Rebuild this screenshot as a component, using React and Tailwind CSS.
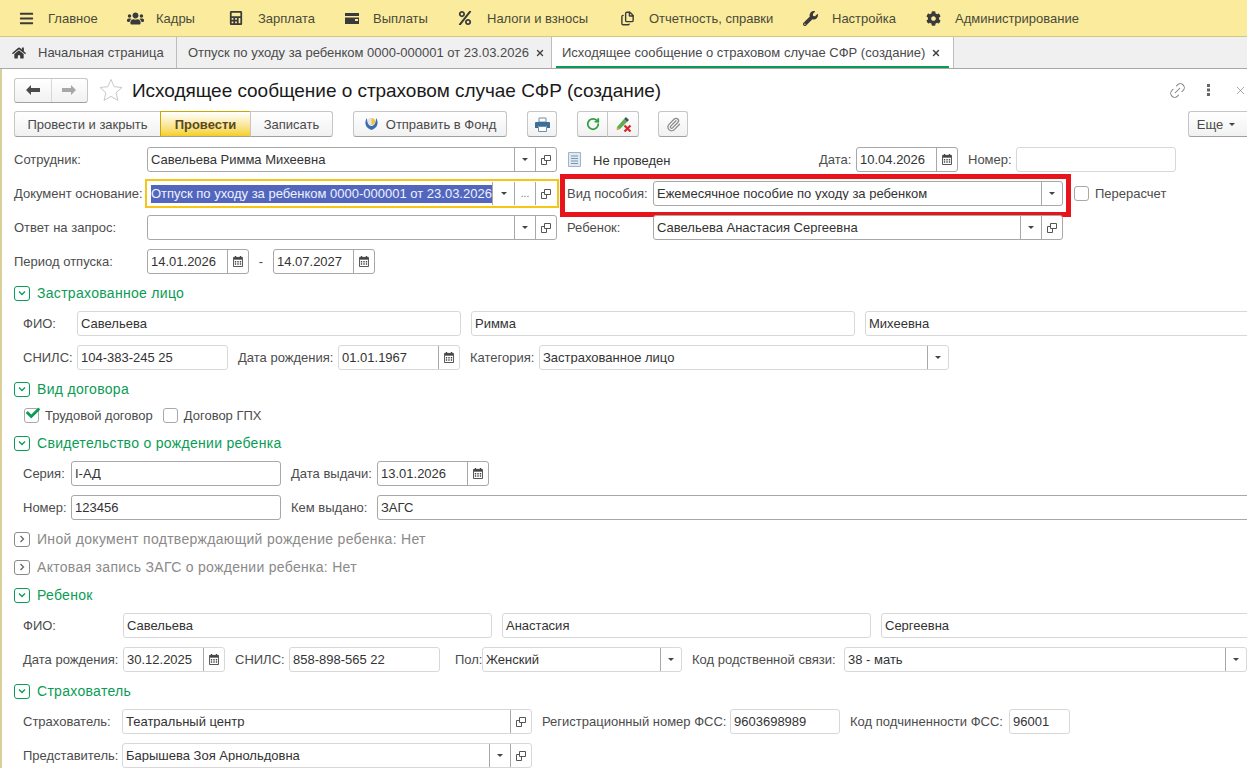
import { Paperclip, RotateCw, Link2, X, Files } from "lucide-react";
import { FaBars, FaUsers, FaCalculator, FaPercent, FaWrench, FaCog, FaHome, FaCheck } from "react-icons/fa";

const WalletIcon = () => (
  <svg width="16" height="13" viewBox="0 0 16 13">
    <path d="M1 1h14v11H1z" fill="#3a3a3a" />
    <path d="M1 4h14v1.5H1z" fill="#fbec9d" />
    <path d="M11 7h3v2h-3z" fill="#fbec9d" />
  </svg>
);

const menu = [
  { label: "Главное", icon: <FaBars size={15} />, w: "w-[108px]" },
  { label: "Кадры", icon: <FaUsers size={17} />, w: "w-[102px]" },
  { label: "Зарплата", icon: <FaCalculator size={14} />, w: "w-[115px]" },
  { label: "Выплаты", icon: <WalletIcon />, w: "w-[114px]" },
  { label: "Налоги и взносы", icon: <FaPercent size={14} />, w: "w-[162px]" },
  { label: "Отчетность, справки", icon: <Files size={15} strokeWidth={2.2} />, w: "w-[183px]" },
  { label: "Настройка", icon: <FaWrench size={15} />, w: "w-[123px]" },
  { label: "Администрирование", icon: <FaCog size={15} />, w: "w-[200px]" },
];

const CalIcon = () => (
  <svg width="10" height="11" viewBox="0 0 11 12">
    <path d="M2 0h1.5v2H2zM7.5 0H9v2H7.5z" fill="#444" />
    <path d="M0.5 1.5h10v10h-10z" fill="none" stroke="#444" />
    <path d="M1 1.5h9v2.5H1z" fill="#444" />
    <path d="M2 5.5h1.5V7H2zM4.75 5.5h1.5V7h-1.5zM7.5 5.5H9V7H7.5zM2 8h1.5v1.5H2zM4.75 8h1.5v1.5h-1.5zM7.5 8H9v1.5H7.5z" fill="#444" />
  </svg>
);

const OpenIcon = () => (
  <svg width="10" height="10" viewBox="0 0 10 10" fill="none" stroke="#555">
    <path d="M3.5 0.5h6v5h-6z" />
    <path d="M3.5 3.5h-3v6h5v-4" />
  </svg>
);

const Caret = () => <span className="border-x-[3px] border-t-[3px] border-x-transparent border-t-[#444]" />;

const Side = ({ className = "w-[21px]", children }) => (
  <span className={`flex h-full shrink-0 items-center justify-center border-l border-[#a8a8a8] ${className}`}>{children}</span>
);

function Field({ w, value, light, drop, dots, open, cal, dropW, selected }) {
  return (
    <div
      className={`flex h-[25px] shrink-0 items-center rounded-[3px] border bg-white text-[#333] ${w} ${
        light ? "border-[#d8d8d8]" : "border-[#a8a8a8]"
      }`}
    >
      <span className="min-w-0 flex-1 overflow-hidden whitespace-nowrap pl-[3px]">
        {selected ? <span className="block bg-[#5366bd] leading-[18px] text-[#eef2ff]">{value}</span> : value}
      </span>
      {drop && <Side className={dropW || "w-[21px]"}><Caret /></Side>}
      {dots && <Side><span className="text-[10px] text-[#666]">...</span></Side>}
      {open && <Side><OpenIcon /></Side>}
      {cal && <Side><CalIcon /></Side>}
    </div>
  );
}

const Label = ({ w, children }) => <span className={`shrink-0 whitespace-nowrap text-[#4c4c4c] ${w}`}>{children}</span>;

function Group({ title, closed, className }) {
  return (
    <div className={`flex h-4 items-center pl-3 text-[14px] tracking-[0.3px] ${closed ? "text-[#8a8a8a]" : "text-[#0a9c55]"} ${className}`}>
      <span className={`mr-[7px] flex h-[15px] w-4 items-center justify-center rounded-[3px] border ${closed ? "border-[#8a8a8a]" : "border-[#0a9c55]"}`}>
        <svg width="8" height="8" viewBox="0 0 8 8" fill="none" stroke={closed ? "#666" : "#0a9c55"} strokeWidth="1.3">
          {closed ? <path d="M2.5 1l3 3-3 3" /> : <path d="M1 2.5l3 3 3-3" />}
        </svg>
      </span>
      {title}
    </div>
  );
}

function Btn({ className = "", children }) {
  return (
    <div className={`flex h-[26px] shrink-0 items-center justify-center border border-[#c6c6c6] border-b-[#a0a0a0] bg-linear-to-b from-white to-[#f1f1f1] text-[#4a4a4a] ${className}`}>
      {children}
    </div>
  );
}

const Checkbox = ({ checked }) => (
  <span className="relative mr-[6px] h-[15px] w-[15px] shrink-0 rounded-[3px] border border-[#a8a8a8] bg-white">
    {checked && <FaCheck size={14} className="absolute -top-[3px] left-px text-[#0a9c55]" />}
  </span>
);

export default function App() {
  return (
    <div className="h-screen w-full overflow-hidden bg-white font-['Liberation_Sans',Arial,sans-serif] text-[13px] leading-none">
      {/* Top menu */}
      <div className="flex h-[37px] items-center border-b border-[#d6c67e] bg-[#fbec9d] pl-[19px] text-[#4a4a3a]">
        {menu.map((m) => (
          <div key={m.label} className={`flex shrink-0 items-center ${m.w}`}>
            <span className="flex w-[29px] shrink-0 items-center text-[#3a3a3a]">{m.icon}</span>
            {m.label}
          </div>
        ))}
      </div>

      {/* Tabs */}
      <div className="flex h-[32px] border-b border-[#a8a8a8] bg-[#f0f0f0] text-[#4a4a4a]">
        <div className="flex w-[177px] items-center border-r border-[#bdbdbd] pl-3">
          <FaHome size={14} className="mr-3 text-[#3a3a3a]" />
          Начальная страница
        </div>
        <div className="flex w-[375px] items-center border-r border-[#bdbdbd] pl-[11px]">
          Отпуск по уходу за ребенком 0000-000001 от 23.03.2026
          <X size={10} strokeWidth={3.5} className="ml-[6px] text-[#444]" />
        </div>
        <div className="flex w-[402px] items-center border-r border-[#bdbdbd] bg-white px-1">
          <div className="flex h-full w-full items-center border-b-2 border-[#0a9c55] pl-[6px] pt-[2px]">
            Исходящее сообщение о страховом случае СФР (создание)
            <X size={10} strokeWidth={3.5} className="ml-[6px] text-[#444]" />
          </div>
        </div>
      </div>

      {/* Form */}
      <div className="border-l-2 border-[#d9cf9a]">
        <div className="flex h-[42px] items-center pl-3">
          <div className="flex h-[25px] w-[74px] items-center rounded-[3px] border border-[#c6c6c6] border-b-[#a0a0a0] bg-linear-to-b from-white to-[#f1f1f1]">
            <span className="flex h-full w-[37px] items-center justify-center border-r border-[#d8d8d8]">
              <svg width="14" height="10" viewBox="0 0 14 10" fill="#4a4a4a"><path d="M0 5l5-5v3h9v4H5v3z" /></svg>
            </span>
            <span className="flex w-[36px] items-center justify-center">
              <svg width="14" height="10" viewBox="0 0 14 10" fill="#a8a8a8"><path d="M14 5L9 0v3H0v4h9v3z" /></svg>
            </span>
          </div>
          <svg width="24" height="24" viewBox="0 0 24 24" fill="none" stroke="#c8c8c8" className="ml-[11px]">
            <path d="M12 1.5l3.2 7.2 7.8.8-5.9 5.2 1.8 7.7-6.9-4-6.9 4 1.8-7.7L1 9.5l7.8-.8z" />
          </svg>
          <span className="ml-[9px] text-[19px] tracking-[-0.04px] text-[#1a1a1a]">Исходящее сообщение о страховом случае СФР (создание)</span>
          <div className="ml-auto flex items-center text-[#777]">
            <Link2 size={19} strokeWidth={1.2} className="mr-[20px] -rotate-45" />
            <svg width="4" height="12" viewBox="0 0 4 12" fill="#666" className="mr-[23px]"><path d="M0 0h3v3H0zM0 4.5h3v3H0zM0 9h3v3H0z" /></svg>
            <X size={13} strokeWidth={1.2} />
          </div>
        </div>

        {/* Command bar */}
        <div className="flex pl-3">
          <Btn className="w-[147px] rounded-l-[3px]">Провести и закрыть</Btn>
          <Btn className="-ml-px w-[91px] border-[#c9a800] from-[#ffe95c] to-[#f5d000] font-bold text-[#5a4a1a]">Провести</Btn>
          <Btn className="-ml-px w-[83px] rounded-r-[3px]">Записать</Btn>
          <Btn className="ml-5 w-[154px] rounded-[3px]">
            <svg width="15" height="14" viewBox="0 0 15 14" className="mr-[7px]">
              <path d="M3 1C0 5 1 11 7.5 13 14 11 15 5 12 1c0 5-2 8-4.500 8S3 6 3 1z" fill="#3b6cb0" />
              <circle cx="7.500" cy="4.500" r="3.500" fill="#f0c23a" />
              <path d="M7.500 1a3.500 3.500 0 0 0 0 7z" fill="#dfe6ee" />
            </svg>
            Отправить в Фонд
          </Btn>
          <Btn className="ml-5 w-[30px] rounded-[3px]">
            <svg width="15" height="15" viewBox="0 0 15 15">
              <path d="M4 1h7v4H4z" fill="#fff" stroke="#6f8fa8" />
              <path d="M1 5h13q1 0 1 1v5h-3V9H3v2H0V6q0-1 1-1z" fill="#3c6e96" />
              <path d="M3.500 9.500h8v5h-8z" fill="#fff" stroke="#6f8fa8" />
            </svg>
          </Btn>
          <Btn className="ml-5 w-[31px] rounded-l-[3px]"><RotateCw size={14} strokeWidth={3} className="text-[#2f9e3f]" /></Btn>
          <Btn className="-ml-px w-[32px] rounded-r-[3px]">
            <svg width="17" height="16" viewBox="0 0 17 16">
              <path d="M2 11l7-8 3 3-7 7-3 1z" fill="#5fae4e" />
              <path d="M9 3l2-2 3 3-2 2z" fill="#3e5a5a" />
              <path d="M1.500 14l.5-3 3 2z" fill="#e0a050" />
              <path d="M9.500 9.500l6 6M15.500 9.500l-6 6" stroke="#d8262c" strokeWidth="2.200" />
            </svg>
          </Btn>
          <Btn className="ml-[19px] w-[30px] rounded-[3px]"><Paperclip size={15} className="text-[#8a8a8a]" /></Btn>
          <Btn className="ml-auto w-[59px] rounded-l-[3px] border-r-0 pr-1">
            Еще <span className="ml-[6px] border-x-[3px] border-t-[3px] border-x-transparent border-t-[#444]" />
          </Btn>
        </div>

        <div className="mt-[10px] flex items-center pl-3">
          <Label w="w-[133px]">Сотрудник:</Label>
          <Field w="w-[410px]" value="Савельева Римма Михеевна" drop open />
          <svg width="13" height="15" viewBox="0 0 13 15" className="ml-[11px] mr-3">
            <path d="M0.5 0.5h12v14H0.5z" fill="#dfe9f3" stroke="#9fb4c8" />
            <path d="M3 4h7M3 6.500h7M3 9h7M3 11.500h7" stroke="#7d95ab" />
          </svg>
          <span className="w-[226px] shrink-0 pt-[2px] text-[#333]">Не проведен</span>
          <Label w="w-[37px]">Дата:</Label>
          <Field w="w-[102px]" value="10.04.2026" cal />
          <Label w="ml-[10px] w-[48px]">Номер:</Label>
          <Field w="w-[160px]" value="" light />
        </div>

        <div className="mt-[9px] flex items-center pl-3">
          <Label w="w-[133px]">Документ основание:</Label>
          <div className="shrink-0 outline-2 outline-offset-0 outline-[#f5c518]">
            <Field
              w="w-[410px] border-transparent"
              value="Отпуск по уходу за ребенком 0000-000001 от 23.03.2026"
              selected
              drop
              dots
              open
              dropW="w-[22px]"
            />
          </div>
          <div className="-mb-[11px] ml-[3px] -mt-[7px] flex shrink-0 items-start border-[5px] border-[#e8141c] pb-[6px] pl-[2px] pr-[3px] pt-[2px]">
            <Label w="w-[86px] pt-[6px]">Вид пособия:</Label>
            <Field w="w-[410px]" value="Ежемесячное пособие по уходу за ребенком" drop />
          </div>
          <span className="ml-[3px] flex items-center text-[#4c4c4c]"><Checkbox />Перерасчет</span>
        </div>

        <div className="mt-[9px] flex items-center pl-3">
          <Label w="w-[133px]">Ответ на запрос:</Label>
          <Field w="w-[410px]" value="" drop open />
          <Label w="ml-[10px] w-[86px]">Ребенок:</Label>
          <Field w="w-[410px]" value="Савельева Анастасия Сергеевна" drop open />
        </div>

        <div className="mt-[9px] flex items-center pl-3">
          <Label w="w-[133px]">Период отпуска:</Label>
          <Field w="w-[102px]" value="14.01.2026" cal />
          <span className="w-[24px] text-center text-[#4c4c4c]">-</span>
          <Field w="w-[102px]" value="14.07.2027" cal />
        </div>

        <Group title="Застрахованное лицо" className="mt-[11px]" />
        <div className="mt-[10px] flex items-center gap-[10px] pl-[21px]">
          <Label w="-mr-[10px] w-[54px]">ФИО:</Label>
          <Field w="w-[384px]" value="Савельева" light />
          <Field w="w-[384px]" value="Римма" light />
          <Field w="w-[400px]" value="Михеевна" light />
        </div>
        <div className="mt-[9px] flex items-center pl-[21px]">
          <Label w="w-[54px]">СНИЛС:</Label>
          <Field w="w-[151px]" value="104-383-245 25" light />
          <Label w="ml-[10px] w-[100px]">Дата рождения:</Label>
          <Field w="w-[122px]" value="01.01.1967" light cal />
          <Label w="ml-[10px] w-[69px]">Категория:</Label>
          <Field w="w-[410px]" value="Застрахованное лицо" light drop />
        </div>

        <Group title="Вид договора" className="mt-[11px]" />
        <div className="mt-[10px] flex h-4 items-center pl-[22px] text-[#4c4c4c]">
          <Checkbox checked />
          <span className="mr-[10px]">Трудовой договор</span>
          <Checkbox />
          Договор ГПХ
        </div>

        <Group title="Свидетельство о рождении ребенка" className="mt-[12px]" />
        <div className="mt-[10px] flex items-center pl-[21px]">
          <Label w="w-[48px]">Серия:</Label>
          <Field w="w-[210px]" value="I-АД" />
          <Label w="ml-[10px] w-[86px]">Дата выдачи:</Label>
          <Field w="w-[112px]" value="13.01.2026" cal />
        </div>
        <div className="mt-[9px] flex items-center pl-[21px]">
          <Label w="w-[48px]">Номер:</Label>
          <Field w="w-[210px]" value="123456" />
          <Label w="ml-[10px] w-[86px]">Кем выдано:</Label>
          <Field w="w-[890px]" value="ЗАГС" />
        </div>

        <Group title="Иной документ подтверждающий рождение ребенка: Нет" closed className="mt-[11px]" />
        <Group title="Актовая запись ЗАГС о рождении ребенка: Нет" closed className="mt-[12px]" />

        <Group title="Ребенок" className="mt-[12px]" />
        <div className="mt-[10px] flex items-center gap-[10px] pl-[21px]">
          <Label w="-mr-[10px] w-[100px]">ФИО:</Label>
          <Field w="w-[369px]" value="Савельева" light />
          <Field w="w-[369px]" value="Анастасия" light />
          <Field w="w-[380px]" value="Сергеевна" light />
        </div>
        <div className="mt-[9px] flex items-center pl-[21px]">
          <Label w="w-[100px]">Дата рождения:</Label>
          <Field w="w-[102px]" value="30.12.2025" light cal />
          <Label w="ml-[10px] w-[54px]">СНИЛС:</Label>
          <Field w="w-[151px]" value="858-898-565 22" light />
          <Label w="ml-[15px] w-[27px]">Пол:</Label>
          <Field w="w-[200px]" value="Женский" light drop />
          <Label w="ml-[10px] w-[152px]">Код родственной связи:</Label>
          <Field w="w-[403px]" value="38 - мать" light drop />
        </div>

        <Group title="Страхователь" className="mt-[11px]" />
        <div className="mt-[10px] flex items-center pl-[21px]">
          <Label w="w-[99px]">Страхователь:</Label>
          <Field w="w-[410px]" value="Театральный центр" light open />
          <Label w="ml-[10px] w-[188px]">Регистрационный номер ФСС:</Label>
          <Field w="w-[110px]" value="9603698989" light />
          <Label w="ml-[10px] w-[159px]">Код подчиненности ФСС:</Label>
          <Field w="w-[61px]" value="96001" light />
        </div>
        <div className="mt-[9px] flex items-center pl-[21px]">
          <Label w="w-[99px]">Представитель:</Label>
          <Field w="w-[410px]" value="Барышева Зоя Арнольдовна" light drop open />
        </div>
      </div>
    </div>
  );
}
